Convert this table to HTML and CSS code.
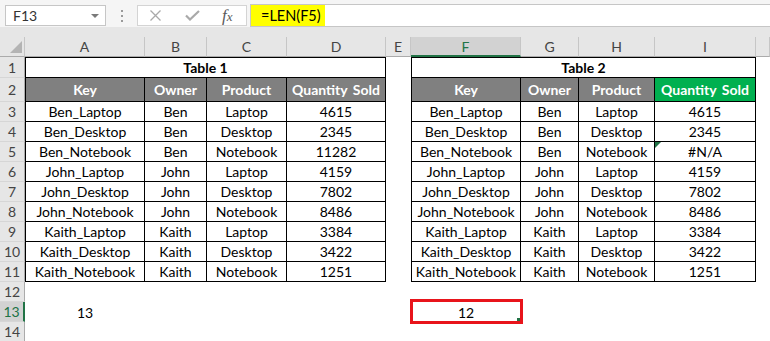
FILE: index.html
```html
<!doctype html>
<html lang="en">
<head>
  <meta charset="utf-8">
  <meta name="viewport" content="width=device-width,initial-scale=1">
  <title>LEN - Book1</title>
  <link rel="stylesheet" href="styles.css">
</head>
<body>
  <div class="app">
    <div class="fbar">
      <div class="namebox">
        <span>F13</span>
        <svg class="drop" width="8" height="4" viewBox="0 0 8 4"><path d="M0 0h8L4 4z"/></svg>
      </div>
      <div class="grip"><i></i><i></i><i></i></div>
      <div class="btns">
        <svg class="ico x" width="11" height="11" viewBox="0 0 11 11"><path d="M.5 .5l10 10M10.5 .5l-10 10"/></svg>
        <svg class="ico ok" width="15" height="11" viewBox="0 0 15 11"><path d="M1 5.5l4 4L14 1"/></svg>
        <span class="fx">f<small>x</small></span>
      </div>
      <div class="formula"><span class="hl">=LEN(F5)</span></div>
    </div>
    <div class="sheet" id="sheet"></div>
  </div>

  <script>
    const sheet=document.getElementById('sheet')
    function cell(text,cls){const d=document.createElement('div');d.className=cls||'e';d.textContent=text||'';sheet.appendChild(d);return d}

    const letters=['A','B','C','D','E','F','G','H','I','']
    const heads=['Key','Owner','Product','Quantity Sold']
    const data=[
      ['Ben_Laptop','Ben','Laptop',4615],
      ['Ben_Desktop','Ben','Desktop',2345],
      ['Ben_Notebook','Ben','Notebook',11282],
      ['John_Laptop','John','Laptop',4159],
      ['John_Desktop','John','Desktop',7802],
      ['John_Notebook','John','Notebook',8486],
      ['Kaith_Laptop','Kaith','Laptop',3384],
      ['Kaith_Desktop','Kaith','Desktop',3422],
      ['Kaith_Notebook','Kaith','Notebook',1251]
    ]

    // column headers
    cell('','corner')
    letters.forEach(l=>cell(l,'ch'+(l==='F'?' sel':'')))

    // row 1: titles
    cell('1','rh')
    cell('Table 1','c t l title span4')
    cell()
    cell('Table 2','c t l title span4')
    cell()

    // row 2: headers
    cell('2','rh')
    heads.forEach((h,i)=>cell(h,'c hd'+(i===0?' l':'')))
    cell()
    heads.forEach((h,i)=>cell(h,'c hd'+(i===0?' l':'')+(i===3?' green':'')))
    cell()

    // rows 3-11; table 2 lookup misses Ben_Notebook
    data.forEach((r,n)=>{
      cell(String(n+3),'rh')
      r.forEach((v,i)=>cell(String(v),'c'+(i===0?' l':'')))
      cell()
      r.forEach((v,i)=>{
        if(i===3&&r[0]==='Ben_Notebook') cell('#N/A','c err')
        else cell(String(v),'c'+(i===0?' l':''))
      })
      cell()
    })

    // rows 12-14
    cell('12','rh')
    for(let i=0;i<10;i++) cell()
    cell('13','rh sel')
    cell('13')
    for(let i=0;i<4;i++) cell()
    cell('12','pick')
    for(let i=0;i<4;i++) cell()
    cell('14','rh')
    for(let i=0;i<10;i++) cell()
  </script>
</body>
</html>
```

FILE: styles.css
```css
body{margin:0;font-family:Lato,"Liberation Sans",sans-serif;background:#e6e6e6}
.app{width:770px;height:341px;overflow:hidden;background:#e6e6e6}

/* formula bar */
.fbar{height:27px;box-sizing:border-box;padding:4px 0 0 5px;display:flex;align-items:flex-start;background:#f5f5f5}
.namebox{margin-top:1px;width:101px;height:21px;box-sizing:border-box;border:1px solid #c6c6c6;background:#fff;display:flex;align-items:center;justify-content:space-between;padding:0 6px 0 7px;font-size:14px;color:#333}
.drop{fill:#7a7a7a}
.grip{width:31px;height:21px;display:flex;flex-direction:column;align-items:center;gap:3px;padding-top:6px;box-sizing:border-box}
.grip i{width:2px;height:2px;background:#9a9a9a}
.btns{margin-top:1px;width:110px;height:21px;box-sizing:border-box;border:1px solid #d4d4d4;background:#fff;display:flex;align-items:center;padding-left:12px}
.ico{fill:none;stroke:#a9a9a9}
.ico.x{stroke-width:1.3;margin-right:24px}
.ico.ok{stroke-width:2.2;margin-right:22px}
.fx{font-family:"Liberation Serif",serif;font-style:italic;font-size:17px;color:#5a5a5a;line-height:1}
.fx small{font-size:13px}
.formula{margin-left:3px;flex:1;height:23px;box-sizing:border-box;border:1px solid #c6c6c6;border-right:0;background:#fff}
.hl{display:inline-block;width:74px;height:21px;line-height:21px;padding-left:10px;box-sizing:border-box;background:#ffff00;font-size:14.5px;color:#000}

/* grid */
.sheet{margin-top:10px;display:grid;grid-template-columns:25px 120px 62px 80px 99px 25px 110px 58px 76px 101px 14px;grid-template-rows:20px 21px 24px repeat(12,20px);background:#fff;font-size:14px;color:#000}
.sheet>div{display:flex;align-items:center;justify-content:center;white-space:nowrap;overflow:hidden;box-sizing:border-box;position:relative}

.corner,.ch{background:#e6e6e6;border-right:1px solid #c6c6c6;border-bottom:1px solid #ababab}
.corner::after{content:'';position:absolute;right:2px;bottom:3px;border-style:solid;border-width:0 0 12px 12px;border-color:transparent transparent #b4b4b4 transparent}
.ch{color:#444;font-size:14px}
.ch.sel{background:#d2d2d2;color:#217346;border-bottom:2px solid #217346}
.rh{background:#e6e6e6;border-right:1px solid #ababab;border-bottom:1px solid #d6d6d6;color:#444;font-size:14px}
.rh.sel{background:#d2d2d2;color:#217346;border-right:2px solid #217346}

.c{border-right:1px solid #000;border-bottom:1px solid #000}
.c.l{border-left:1px solid #000}
.c.t{border-top:1px solid #000}
.title{font-weight:bold}
.span4{grid-column:span 4}
.hd{background:#808080;color:#fff;font-weight:bold;word-spacing:2px}
.hd.green{background:#00b050}
.err::before{content:'';position:absolute;left:0;top:0;border-style:solid;border-width:6px 6px 0 0;border-color:#217346 transparent transparent transparent}

/* selected cell with a red frame */
.sheet>.pick{overflow:visible;z-index:1}
.pick::after{content:'';position:absolute;left:-1px;top:-3px;right:-2px;bottom:-2px;border:3px solid #e8141b}
.pick::before{content:'';position:absolute;right:1px;bottom:1px;width:3px;height:3px;background:#217346}
```
